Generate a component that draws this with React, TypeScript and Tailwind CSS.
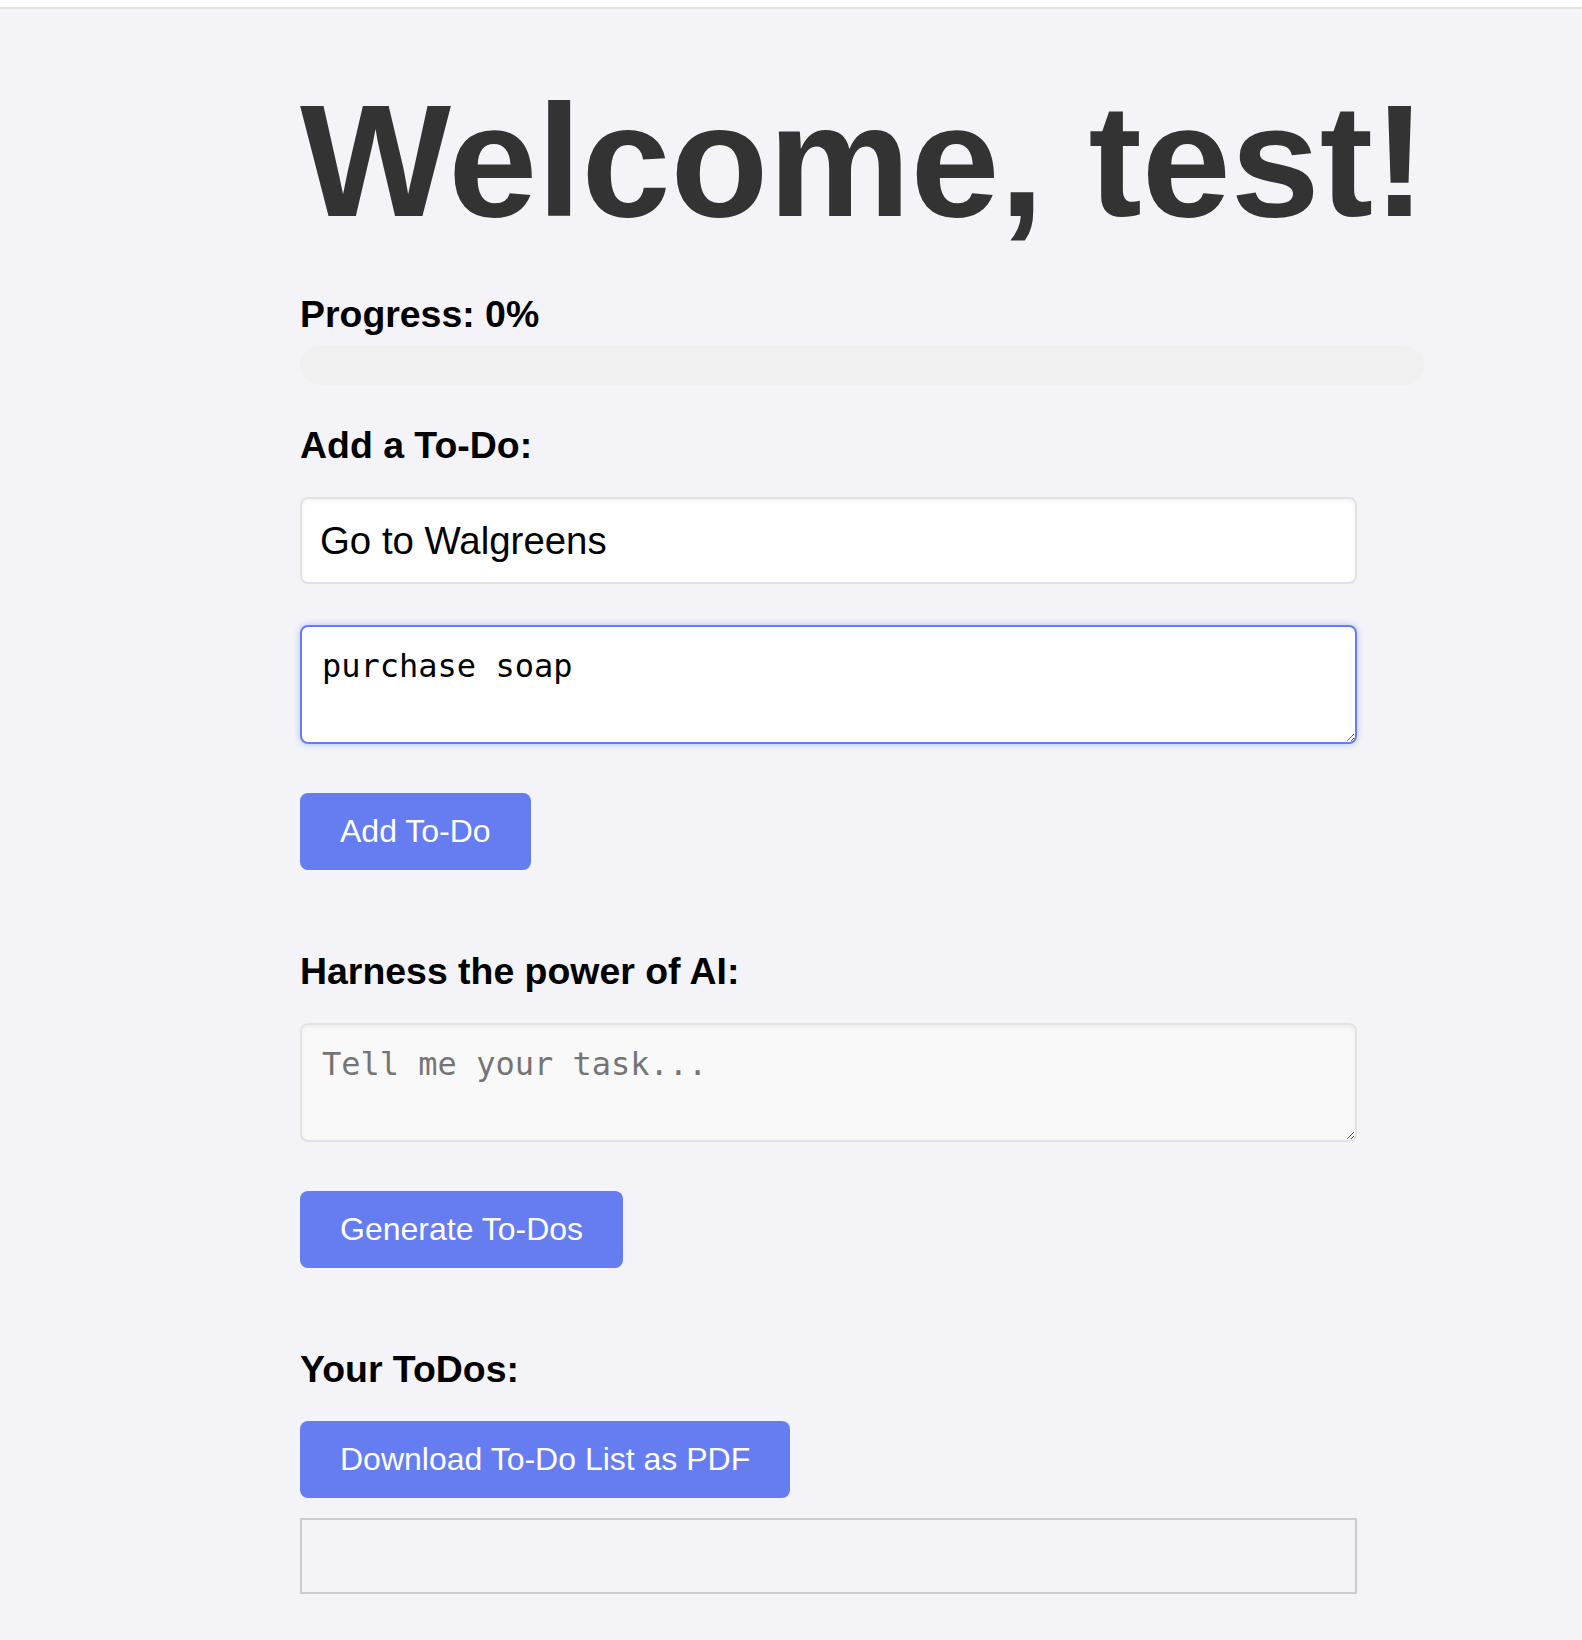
import { useState } from "react";

const SANS = "font-['Liberation_Sans',Arial,sans-serif]";
const MONO = "font-['DejaVu_Sans_Mono',monospace]";

const BUTTON =
  "block rounded-[8px] bg-[#657df1] px-[40px] py-[20px] text-[32px] leading-[37px] text-white hover:bg-[#5a6fd6]";

export default function App() {
  const [title, setTitle] = useState("Go to Walgreens");
  const [notes, setNotes] = useState("purchase soap");
  const [prompt, setPrompt] = useState("");
  const progress = 0;

  return (
    <div className={`min-h-screen bg-[#f4f4f8] ${SANS}`}>
      <div className="h-[9px] border-b-2 border-[#e2e2e2] bg-white" />

      <main className="pb-[46px] pl-[300px]">
        <h1 className="mt-[72px] whitespace-nowrap text-[160px] font-bold leading-[160px] text-[#333]">
          Welcome, test!
        </h1>

        <h3 className="mt-[52px] text-[37.44px] font-bold leading-[42px] text-black">
          Progress: {progress}%
        </h3>
        <div className="mt-[11px] h-[39px] w-[1124px] overflow-hidden rounded-full bg-[#f0f0f0]">
          <div
            className="h-full rounded-full bg-[#657df1]"
            style={{ width: `${progress}%` }}
          />
        </div>

        <h3 className="mt-[39px] text-[37.44px] font-bold leading-[42px] text-black">
          Add a To-Do:
        </h3>
        <input
          type="text"
          value={title}
          onChange={(e) => setTitle(e.target.value)}
          className="mt-[31px] block h-[87px] w-[1057px] rounded-[8px] border-2 border-[#e2e2e2] bg-white px-[18px] text-[38.4px] text-black shadow-[inset_0_2px_4px_rgba(0,0,0,0.05)] outline-none"
        />
        <textarea
          autoFocus
          value={notes}
          onChange={(e) => setNotes(e.target.value)}
          className={`mt-[41px] block h-[119px] w-[1057px] rounded-[8px] border-2 border-[#657df1] bg-white px-[20px] pb-[20px] pt-[15px] text-[32px] text-black shadow-[0_0_7px_rgba(101,125,241,0.45)] outline-none ${MONO}`}
        />
        <button type="button" className={`mt-[49px] ${BUTTON}`}>
          Add To-Do
        </button>

        <h3 className="mt-[80px] text-[37.44px] font-bold leading-[42px] text-black">
          Harness the power of AI:
        </h3>
        <textarea
          value={prompt}
          onChange={(e) => setPrompt(e.target.value)}
          placeholder="Tell me your task..."
          className={`mt-[31px] block h-[119px] w-[1057px] rounded-[8px] border-2 border-[#e2e2e2] bg-[#f9f9f9] px-[20px] pb-[20px] pt-[15px] text-[32px] text-black shadow-[inset_0_2px_4px_rgba(0,0,0,0.05)] outline-none placeholder:text-[#757575] ${MONO}`}
        />
        <button type="button" className={`mt-[49px] ${BUTTON}`}>
          Generate To-Dos
        </button>

        <h3 className="mt-[80px] text-[37.44px] font-bold leading-[42px] text-black">
          Your ToDos:
        </h3>
        <button type="button" className={`mt-[31px] ${BUTTON}`}>
          Download To-Do List as PDF
        </button>
        <ul className="mt-[20px] h-[76px] w-[1057px] border-2 border-[#cccccc]" />
      </main>
    </div>
  );
}
